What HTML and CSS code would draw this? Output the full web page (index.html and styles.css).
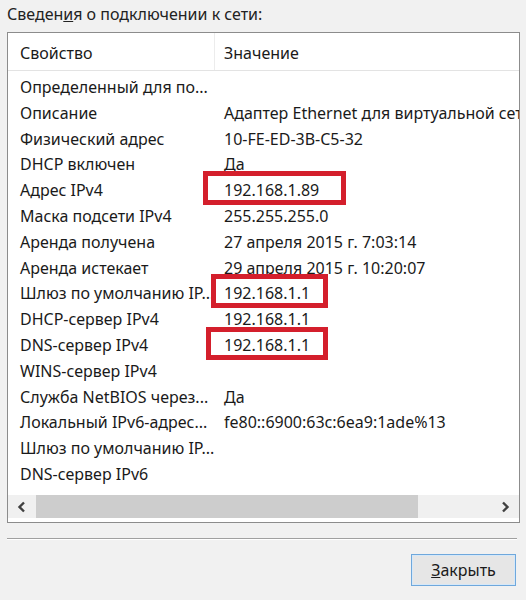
FILE: index.html
```html
<!DOCTYPE html>
<html lang="ru">
<head>
  <meta charset="UTF-8">
  <title>Сведения о сетевом подключении</title>
  <link rel="stylesheet" href="styles.css">
</head>
<body>
  <div class="dialog">
    <div class="caption">Сведен<u>и</u>я о подключении к сети:</div>

    <div class="list">
      <div class="head">
        <div class="col-name">Свойство</div>
        <div class="col-value">Значение</div>
      </div>

      <div class="rows">
        <div class="row"><div class="col-name">Определенный для по...</div><div class="col-value"></div></div>
        <div class="row"><div class="col-name">Описание</div><div class="col-value">Адаптер Ethernet для виртуальной сети</div></div>
        <div class="row"><div class="col-name">Физический адрес</div><div class="col-value">10-FE-ED-3B-C5-32</div></div>
        <div class="row"><div class="col-name">DHCP включен</div><div class="col-value">Да</div></div>
        <div class="row"><div class="col-name">Адрес IPv4</div><div class="col-value"><span class="mark mark-a"></span>192.168.1.89</div></div>
        <div class="row"><div class="col-name">Маска подсети IPv4</div><div class="col-value">255.255.255.0</div></div>
        <div class="row"><div class="col-name">Аренда получена</div><div class="col-value">27 апреля 2015 г. 7:03:14</div></div>
        <div class="row"><div class="col-name">Аренда истекает</div><div class="col-value">29 апреля 2015 г. 10:20:07</div></div>
        <div class="row"><div class="col-name">Шлюз по умолчанию IP...</div><div class="col-value"><span class="mark mark-b"></span>192.168.1.1</div></div>
        <div class="row"><div class="col-name">DHCP-сервер IPv4</div><div class="col-value">192.168.1.1</div></div>
        <div class="row"><div class="col-name">DNS-сервер IPv4</div><div class="col-value"><span class="mark mark-c"></span>192.168.1.1</div></div>
        <div class="row"><div class="col-name">WINS-сервер IPv4</div><div class="col-value"></div></div>
        <div class="row"><div class="col-name">Служба NetBIOS через...</div><div class="col-value">Да</div></div>
        <div class="row"><div class="col-name">Локальный IPv6-адрес...</div><div class="col-value">fe80::6900:63c:6ea9:1ade%13</div></div>
        <div class="row"><div class="col-name">Шлюз по умолчанию IP...</div><div class="col-value"></div></div>
        <div class="row"><div class="col-name">DNS-сервер IPv6</div><div class="col-value"></div></div>
      </div>

      <div class="hscroll">
        <div class="arrow">
          <svg width="10" height="12" viewBox="0 0 10 12"><path d="M7 1.5 L2.5 6 L7 10.5" fill="none" stroke="#404040" stroke-width="2.4"/></svg>
        </div>
        <div class="track"><div class="thumb"></div></div>
        <div class="arrow">
          <svg width="10" height="12" viewBox="0 0 10 12"><path d="M3 1.5 L7.5 6 L3 10.5" fill="none" stroke="#404040" stroke-width="2.4"/></svg>
        </div>
      </div>
    </div>

    <div class="separator"></div>

    <div class="buttons">
      <button class="btn"><u>З</u>акрыть</button>
    </div>
  </div>
</body>
</html>
```

FILE: styles.css
```css
body {
  margin: 0;
  background: #f1f1f1;
  font-family: "Noto Sans", "Open Sans", sans-serif;
  font-size: 16px;
  color: #1a1a1a;
}
.dialog {
  width: 526px;
  height: 600px;
  padding: 3px 6px 0 7px;
  box-sizing: border-box;
}
.caption {
  height: 29px;
  line-height: 22px;
  color: #222;
}
.list {
  width: 513px;
  height: 491px;
  box-sizing: border-box;
  border: 1px solid #8c8c8c;
  background: #fff;
  display: flex;
  flex-direction: column;
  overflow: hidden;
}
.head {
  display: flex;
  height: 37px;
  flex-shrink: 0;
  border-bottom: 1px solid #e3e3e3;
  align-items: stretch;
}
.head .col-name {
  border-right: 1px solid #ececec;
}
.head > div {
  display: flex;
  align-items: center;
  padding-top: 2px;
}
.col-name {
  width: 207px;
  flex-shrink: 0;
  padding-left: 12px;
  box-sizing: border-box;
  white-space: nowrap;
}
.col-value {
  padding-left: 9px;
  white-space: nowrap;
  position: relative;
}
.rows {
  padding-top: 4px;
  flex: 1;
}
.row {
  display: flex;
  height: 25.8px;
  line-height: 25.8px;
}
.mark {
  position: absolute;
  top: -7px;
  height: 34px;
  box-sizing: border-box;
  border: 5px solid #d41f2c;
}
.mark-a {
  left: -12px;
  width: 143px;
}
.mark-b {
  left: -4px;
  width: 117px;
}
.mark-c {
  left: -9px;
  top: -6px;
  height: 33px;
  width: 122px;
}
.hscroll {
  display: flex;
  height: 23px;
  margin-bottom: 4px;
  background: #f0f0f0;
  flex-shrink: 0;
}
.arrow {
  width: 28px;
  display: flex;
  align-items: center;
  justify-content: center;
}
.track {
  flex: 1;
  display: flex;
}
.thumb {
  width: 382px;
  background: #cdcdcd;
}
.separator {
  margin-top: 15px;
  width: 510px;
  height: 1px;
  background: #a0a0a0;
  border-bottom: 1px solid #fff;
}
.buttons {
  display: flex;
  justify-content: flex-end;
  padding: 14px 4px 0 0;
}
.btn {
  width: 105px;
  height: 32px;
  font-family: inherit;
  font-size: 16px;
  color: #1a1a1a;
  background: #e6e6e6;
  border: 1px solid #6fa8dc;
  box-shadow: inset 0 0 0 1px #d6e8f8;
  padding: 0;
}
```
